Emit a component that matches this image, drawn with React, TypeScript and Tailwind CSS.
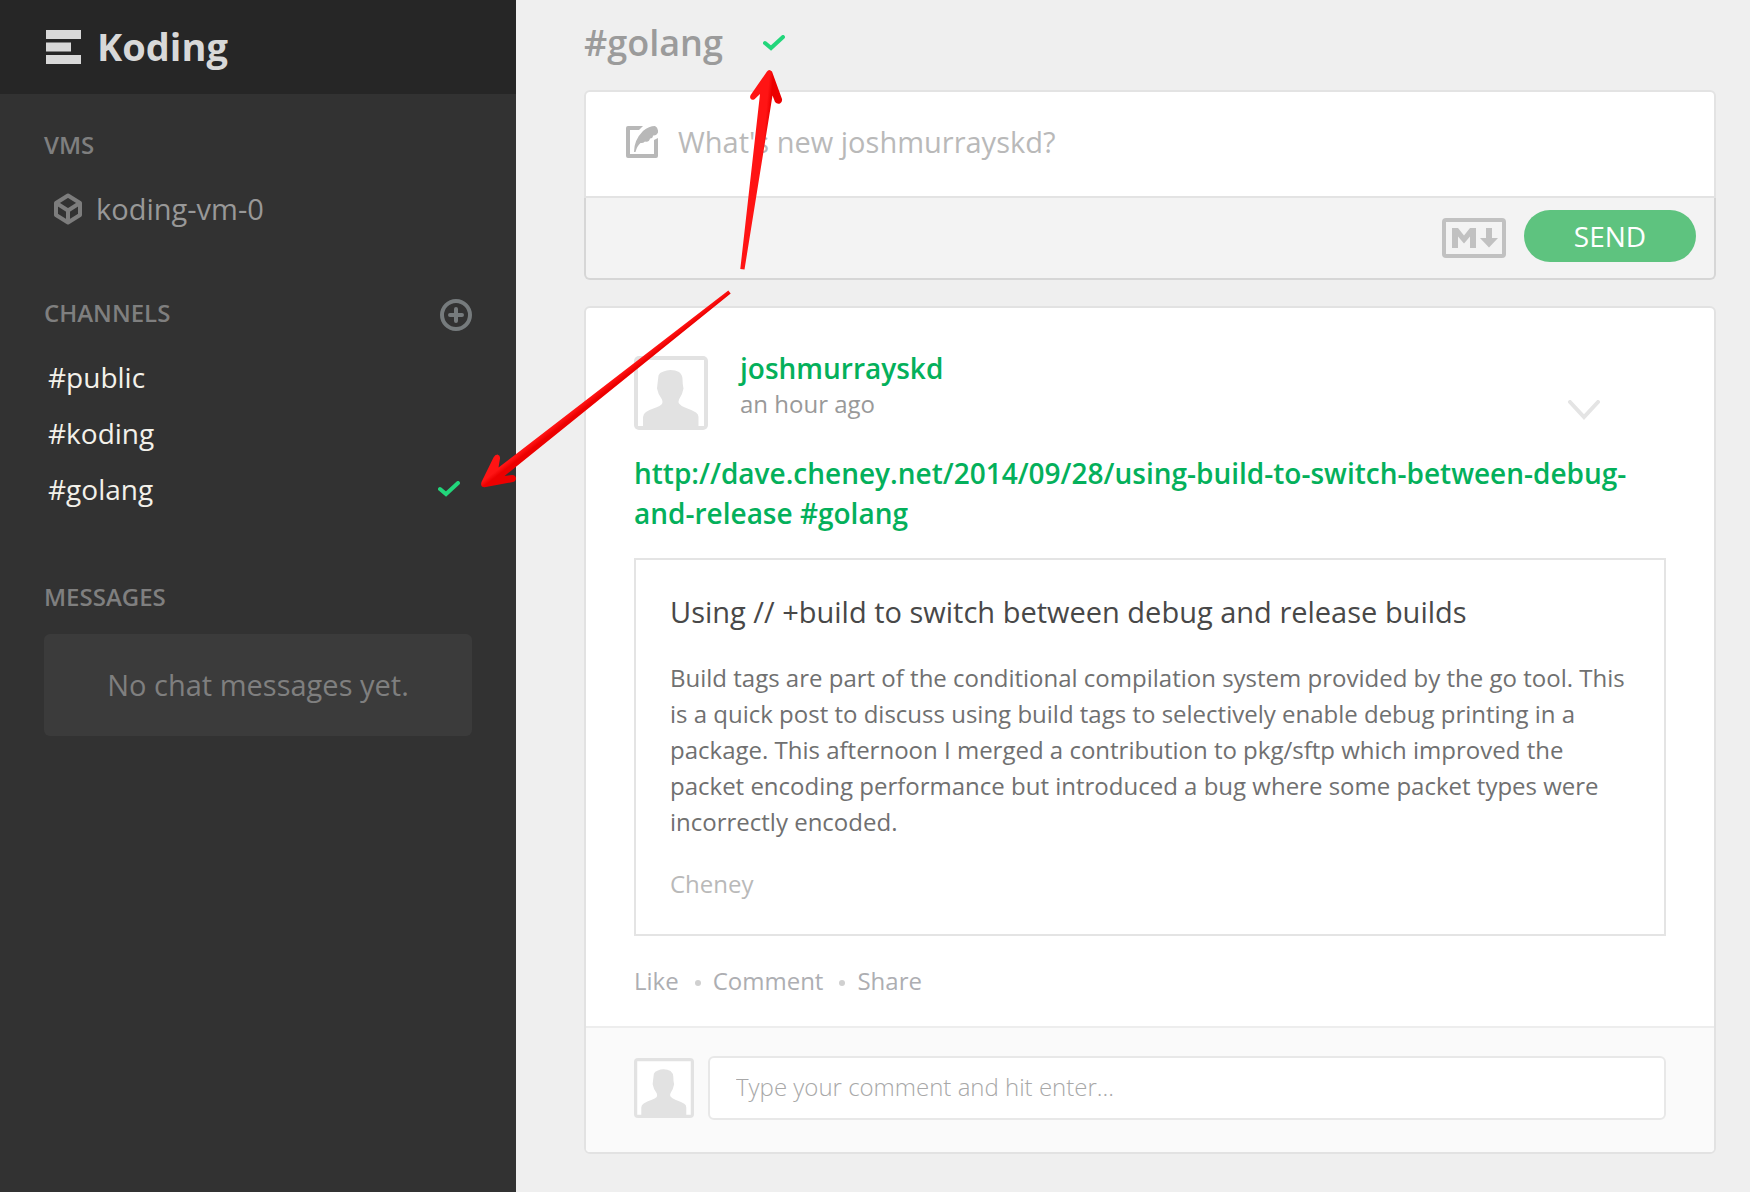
import React from "react";

const channels = [
  { name: "#public", followed: false },
  { name: "#koding", followed: false },
  { name: "#golang", followed: true },
];

function Check() {
  return (
    <svg width="22" height="16" viewBox="0 0 22 16" fill="none" stroke="#22d67b" strokeWidth="4" aria-label="Following">
      <path d="M2 8l6 5L20 2" strokeLinecap="round" />
    </svg>
  );
}

function Cube() {
  return (
    <svg width="28" height="32" viewBox="0 0 28 32" fill="none" stroke="#7d7d7d" strokeWidth="4" strokeLinejoin="round">
      <path d="M14 2.5L26 10v12l-12 7.500L2 22V10z" />
      <path d="M3 10.500l11 7 11-7M14 17v12" />
    </svg>
  );
}

function Avatar({ className }: { className: string }) {
  return (
    <svg className={className} viewBox="0 0 74 74">
      <rect width="74" height="74" rx="5" fill="#e2e2e2" />
      <rect x="4" y="4" width="66" height="66" fill="#fff" />
      <path
        fill="#e2e2e2"
        d="M9 71V61q0-3 3-5q4-2.500 10-4.500q4-1.500 6-3.500q1-2 0-4.500q-4-5-5-11q.5-5 1.500-13q1-3 5-4q3-1.500 7-1.500q5 0 8.500 2q3.500 3 3.500 7q0 5 1 9.500q-1 6-4.500 11q-1 2.500 0 4q2 2.500 6 4q7 2.500 11 5q2.500 1.500 2.500 4.500v10z"
      />
    </svg>
  );
}

function Arrows() {
  return (
    <svg className="pointer-events-none absolute left-0 top-0" width="800" height="500" viewBox="0 0 800 500">
      <defs>
        <linearGradient id="up" gradientUnits="userSpaceOnUse" x1="756" y1="180" x2="767" y2="181">
          <stop offset="0.35" stopColor="#ff1414" />
          <stop offset="0.7" stopColor="#ec0000" />
        </linearGradient>
        <linearGradient id="down" gradientUnits="userSpaceOnUse" x1="601" y1="385" x2="608" y2="394">
          <stop offset="0.3" stopColor="#ff1414" />
          <stop offset="0.7" stopColor="#ec0000" />
        </linearGradient>
      </defs>
      <path
        fill="url(#up)"
        d="M740.300 269L760 94l-5.500 5.200q-2.500 1.500-4-.7q-1-2 .5-4L767 71.500q2-3 5 0L782 99q.5 3-2 4.500q-3 1-5-1.500l-2.500-6.500L744.500 269.500z"
      />
      <path
        fill="url(#down)"
        d="M728.300 290.500L498.500 467.500l1.500-9q.5-3-2.500-4q-2.500 0-4 3L481.500 482q-1.500 5 3 5.200L513 482q3-1 3-4q-1-3.500-4-3l-7.500 1L730.700 293.500z"
      />
    </svg>
  );
}

function SectionTitle({ children }: { children: React.ReactNode }) {
  return <h2 className="text-2xl font-semibold text-[#7f7f7f]">{children}</h2>;
}

function Sidebar() {
  return (
    <aside className="w-[516px] shrink-0 bg-[#323232]">
      <header className="flex h-[94px] items-center gap-4 bg-[#262626] pl-[46px]">
        <svg width="35" height="34" viewBox="0 0 35 34" fill="#d8d8d8">
          <path d="M0 0h35v9H0zM0 12.500h25v9H0zM0 25h35v9H0z" />
        </svg>
        <a href="#home" className="pb-0.5 text-[38px] font-bold leading-[48px] text-[#d8d8d8]">Koding</a>
      </header>

      <nav className="px-11 pt-[35px]">
        <SectionTitle>VMS</SectionTitle>
        <a href="#vm" className="mt-[30px] flex h-9 items-center gap-[14px] pl-[10px] text-[29px] text-[#989898]">
          <Cube />
          koding-vm-0
        </a>

        <div className="mt-[70px] flex h-8 items-start justify-between">
          <SectionTitle>CHANNELS</SectionTitle>
          <button type="button" aria-label="Add channel" className="mt-0.5">
            <svg width="32" height="32" viewBox="0 0 32 32" fill="none" stroke="#767b7d" strokeWidth="4">
              <circle cx="16" cy="16" r="14" />
              <path d="M16 10v12M10 16h12" strokeLinecap="round" />
            </svg>
          </button>
        </div>
        <ul className="mt-5">
          {channels.map((c) => (
            <li key={c.name}>
              <a href={c.name} className="flex h-14 items-center justify-between pl-1 pr-3 text-[28px] font-medium text-[#f3f1ea]">
                {c.name}
                {c.followed && <Check />}
              </a>
            </li>
          ))}
        </ul>

        <div className="mt-16">
          <SectionTitle>MESSAGES</SectionTitle>
        </div>
        <p className="mt-[21px] rounded-md bg-[#3b3b3b] py-[30px] text-center text-[29px] leading-[42px] text-[#7f7f7f]">
          No chat messages yet.
        </p>
      </nav>
    </aside>
  );
}

function Composer() {
  return (
    <form className="mt-[18px]" onSubmit={(e) => e.preventDefault()}>
      <div className="flex h-27 items-center gap-5 rounded-t-md border-2 border-[#e3e3e3] bg-white pb-1 pl-[40px]">
        <svg width="32" height="32" viewBox="0 0 32 32" fill="#b8b8b8">
          <path d="M2 0h15l-4 4H4v24h24V14l4-2v18q0 2-2 2H2q-2 0-2-2V2q0-2 2-2z" />
          <path d="M8 26Q8 14 17 5q6-5 12-5q3.500 2 3 6.500q-1.500 3.500-5 3q0 3-3 3q-1 4-5 3q-2 2-4.500 1.500Q11 20 9.500 26z" />
        </svg>
        <input
          aria-label="New post"
          placeholder="What's new joshmurrayskd?"
          className="min-w-0 flex-1 text-[29px] text-[#555] outline-none placeholder:text-[#b9b9b9]"
        />
      </div>
      <div className="flex h-[82px] items-center justify-end gap-[18px] rounded-b-md border-2 border-t-0 border-[#d6d6d6] bg-[#f3f3f3] pr-[18px]">
        <button type="button" aria-label="Markdown help">
          <svg width="64" height="40" viewBox="0 0 64 40" fill="#c1c1c1">
            <rect x="2" y="2" width="60" height="36" rx="2" fill="none" stroke="#c1c1c1" strokeWidth="4" />
            <path d="M10 30V10h6l6 7.500L28 10h6v20h-6V18.500l-6 7-6-7V30zM44 10h6v10h6L47 29.500 38 20h6z" />
          </svg>
        </button>
        <button
          type="submit"
          className="mb-1 h-[52px] w-[172px] rounded-full bg-[#5ec37f] text-[28px] font-medium leading-[52px] text-white"
        >
          SEND
        </button>
      </div>
    </form>
  );
}

function Post() {
  return (
    <article className="mt-[26px] overflow-hidden rounded-md border-2 border-[#e2e2e2] bg-white">
      <div className="px-12 pt-12">
        <div className="flex items-start">
          <Avatar className="size-[74px]" />
          <div className="-mt-1.5 ml-8 flex-1">
            <a href="#user" className="block text-[28px] font-semibold leading-9 text-[#04b05b]">joshmurrayskd</a>
            <time className="block text-2xl leading-9 text-[#999]">an hour ago</time>
          </div>
          <button type="button" aria-label="Post options" className="mr-16 mt-11">
            <svg width="36" height="20" viewBox="0 0 36 20" fill="none" stroke="#e4e4e4" strokeWidth="4">
              <path d="M4 2l14 15L32 2" strokeLinecap="round" />
            </svg>
          </button>
        </div>
        <p className="mt-[23px] text-[28px] font-semibold leading-10 text-[#04b05b]">
          <a href="http://dave.cheney.net/2014/09/28/using-build-to-switch-between-debug-and-release">
            http://dave.cheney.net/2014/09/28/using-build-to-switch-between-debug-and-release
          </a>{" "}
          <a href="#golang">#golang</a>
        </p>
        <section className="mt-[25px] border-2 border-[#e4e4e4] px-[34px] py-8">
          <h3 className="text-[29px] leading-10 text-[#484848]">
            Using // +build to switch between debug and release builds
          </h3>
          <p className="mt-7 text-2xl leading-9 text-[#707070]">
            Build tags are part of the conditional compilation system provided by the go tool. This is a quick post to
            discuss using build tags to selectively enable debug printing in a package. This afternoon I merged a
            contribution to pkg/sftp which improved the packet encoding performance but introduced a bug where some
            packet types were incorrectly encoded.
          </p>
          <p className="mt-[26px] text-2xl leading-9 text-[#b9b9b9]">Cheney</p>
        </section>
        <div className="flex h-[90px] items-center text-2xl font-medium text-[#adaeb2]">
          <button type="button">Like</button>
          <span className="ml-4 mr-3 mt-1 size-[6px] rounded-full bg-[#d0d0d0]" />
          <button type="button">Comment</button>
          <span className="ml-4 mr-3 mt-1 size-[6px] rounded-full bg-[#d0d0d0]" />
          <button type="button">Share</button>
        </div>
      </div>
      <div className="flex items-center gap-[14px] border-t-2 border-[#ededed] bg-[#fafafa] px-12 pb-8 pt-7">
        <Avatar className="size-[60px]" />
        <input
          aria-label="Comment"
          placeholder="Type your comment and hit enter..."
          className="h-16 min-w-0 flex-1 rounded-md border-2 border-[#e8e8e8] bg-white px-[26px] pb-1 text-2xl font-light text-[#555] outline-none placeholder:text-[#a8a8a8]"
        />
      </div>
    </article>
  );
}

export default function App() {
  return (
    <div className="relative flex min-h-screen bg-[#efefef] font-['Open_Sans',sans-serif]">
      <Sidebar />
      <main className="min-w-0 flex-1 pl-[68px] pr-[34px] pt-[14px]">
        <div className="flex h-[58px] items-center gap-10">
          <h1 className="text-4xl font-semibold text-[#9b9b9b]">#golang</h1>
          <Check />
        </div>
        <Composer />
        <Post />
      </main>
      <Arrows />
    </div>
  );
}
